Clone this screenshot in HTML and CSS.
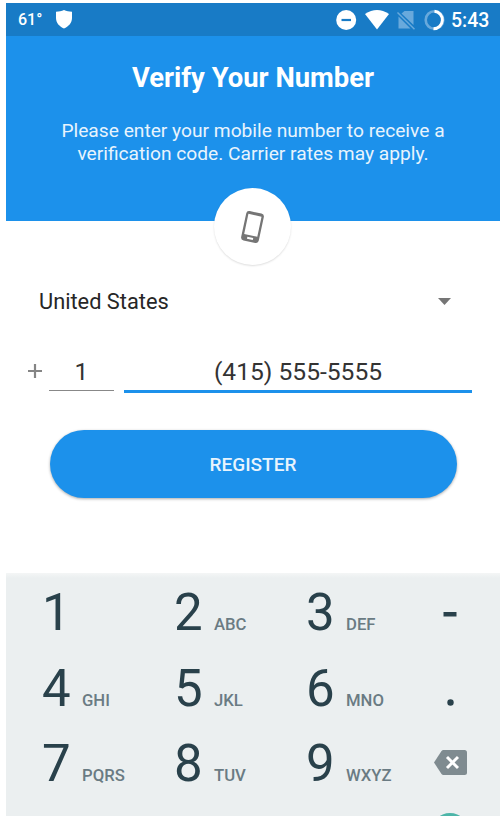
FILE: index.html
```html
<!DOCTYPE html>
<html lang="en">
<head>
<meta charset="utf-8">
<title>Verify Your Number</title>
<link rel="stylesheet" href="styles.css">
</head>
<body>
<main class="screen">
  <div class="status">
    <span class="temp">61°</span>
    <svg class="shield" width="16" height="19" viewBox="0 0 16 19"><path d="M8 0C10.500 1.200 13 1.600 16 1.700V8C16 13 12.500 16.500 8 18.500C3.500 16.500 0 13 0 8V1.700C3 1.600 5.500 1.200 8 0Z" fill="#fff"/></svg>
    <svg class="indicators" width="110" height="24" viewBox="0 0 110 24">
      <circle cx="10.200" cy="12" r="10" fill="#fff"/><path d="M5.500 12H15" stroke="#187bc6" stroke-width="2.200"/>
      <path d="M29 6Q41-1.800 53 6L41 21.500Z" fill="#fff"/>
      <path d="M68.500 3H77.500V17L65.500 5.500Z" fill="#68a9dc"/><path d="M62.500 8.500L74.500 20.500H62.500Z" fill="#68a9dc"/><path d="M61.500 4.500L78.500 21.300" stroke="#68a9dc" stroke-width="1.500"/>
      <circle cx="98.500" cy="12" r="8.800" fill="none" stroke="#68a9dc" stroke-width="2.600"/><path d="M98.500 3.200A8.800 8.800 0 0 1 97.500 20.750" fill="none" stroke="#fff" stroke-width="2.900"/>
    </svg>
    <span class="clock">5:43</span>
  </div>
  <header class="hero">
    <h1>Verify Your Number</h1>
    <p>Please enter your mobile number to receive a<br>verification code. Carrier rates may apply.</p>
    <div class="badge">
      <svg width="27" height="34" viewBox="0 0 27 34"><g transform="rotate(12 13.500 17)"><rect x="4.500" y="2" width="18" height="30" rx="3" fill="#757575"/><rect x="6.800" y="5" width="13.400" height="20.500" fill="#fff"/><rect x="10.500" y="27.600" width="6" height="2" fill="#fff"/></g></svg>
    </div>
  </header>
  <section class="form">
    <div class="country"><span>United States</span><svg width="13" height="7" viewBox="0 0 13 7"><path d="M0 0H13L6.500 7Z" fill="#757575"/></svg></div>
    <div class="phone">
      <svg class="plus" width="14" height="14" viewBox="0 0 14 14"><path d="M7 0V14M0 7H14" stroke="#858585" stroke-width="2.200"/></svg>
      <div class="field code">1</div>
      <div class="field number">(415) 555-5555</div>
    </div>
    <button class="register"><span>REGISTER</span></button>
  </section>
  <section class="keypad">
    <div class="key"><b>1</b></div><div class="key"><b>2</b><span>ABC</span></div><div class="key"><b>3</b><span>DEF</span></div>
    <div class="side dash"><svg width="14" height="5" viewBox="0 0 14 5"><path d="M0.500 0H13.500V4.500H0.500Z" fill="#29414b"/></svg></div>
    <div class="key"><b>4</b><span>GHI</span></div><div class="key"><b>5</b><span>JKL</span></div><div class="key"><b>6</b><span>MNO</span></div>
    <div class="side dot"><svg width="7" height="7" viewBox="0 0 7 7"><circle cx="3.500" cy="3.500" r="3.200" fill="#29414b"/></svg></div>
    <div class="key"><b>7</b><span>PQRS</span></div><div class="key"><b>8</b><span>TUV</span></div><div class="key"><b>9</b><span>WXYZ</span></div>
    <div class="side back"><svg width="33" height="25" viewBox="0 0 33 25"><path d="M9.500 0H30.500Q33 0 33 2.500V22.500Q33 25 30.500 25H9.500Q8.300 25 7.500 24L0 12.500L7.500 1Q8.300 0 9.500 0Z" fill="#7f8b90"/><path d="M13 7L24 18M24 7L13 18" stroke="#fff" stroke-width="2.900"/></svg></div>
    <div class="side enter"><svg width="38" height="38" viewBox="0 0 38 38"><circle cx="19" cy="19" r="19" fill="#4cb5a8"/></svg></div>
  </section>
</main>
</body>
</html>
```
FILE: styles.css
```css
* { box-sizing: border-box; }
body { margin: 0; background: #fff; font-family: Roboto, sans-serif; overflow: hidden; }
svg { display: block; flex: none; }
.screen { height: 816px; padding: 3px 0 0 6px; display: flex; flex-direction: column; overflow: hidden; }
.status { height: 33px; flex: none; background: #187bc6; color: #fff; display: flex; align-items: center; padding: 0 11px 0 12px; font-weight: 500; }
.temp { font-size: 16px; width: 38px; }
.indicators { margin-left: auto; }
.clock { font-size: 19.5px; width: 38px; margin-left: 5px; padding-top: 1px; white-space: nowrap; }
.hero { height: 185px; flex: none; background: #1c91eb; color: #fff; text-align: center; position: relative; }
h1 { margin: 0; padding-top: 25px; font-size: 27.4px; line-height: 34px; font-weight: 700; }
p { margin: 24px 0 0; font-size: 19.2px; line-height: 23px; color: #e8f4fd; }
.badge { position: absolute; left: 208px; top: 152px; width: 77px; height: 77px; border-radius: 50%; background: #fff; display: flex; align-items: center; justify-content: center; box-shadow: 0 1px 2px #0002; }
.form { height: 352px; flex: none; padding-top: 65px; }
.country { height: 30px; display: flex; align-items: center; justify-content: space-between; padding: 0 49px 0 33px; font-size: 21.8px; color: #262626; }
.country span { padding-top: 1px; }
.phone { display: flex; height: 60px; margin-top: 17px; padding: 0 28px 0 22px; align-items: flex-start; }
.plus { margin-top: 31px; }
.field { height: 60px; padding-top: 22px; text-align: center; font-size: 24.6px; line-height: 34px; color: #333; }
.code { width: 65px; margin-left: 7px; border-bottom: 1px solid #888; height: 58px; }
.number { flex: 1; margin-left: 10px; border-bottom: 3px solid #1c91eb; }
.register { display: flex; align-items: center; justify-content: center; margin: 37px 0 0 43.5px; width: 407px; height: 68px; padding: 0; border: 0; border-radius: 34px; background: #1c91eb; color: #e8f4fd; font: 500 19px Roboto, sans-serif; box-shadow: 0 1px 3px #0005; }
.keypad { flex: 1; min-height: 0; background: linear-gradient(#f4f6f6, #ebeff0 5px); display: grid; grid-template-columns: 132px 132px 119px 50px; grid-auto-rows: 75.5px; padding: 1px 0 0 36px; }
.key { display: flex; align-items: baseline; color: #29414b; line-height: 77.5px; }
.key b { font-size: 51px; font-weight: 400; width: 40px; }
.key span { font-size: 16.7px; font-weight: 500; color: #6a7b83; }
.side { display: flex; align-items: center; justify-content: center; }
.dash { padding-top: 5px; }
.dot { padding-top: 31px; }
.enter { grid-column: 4; align-items: flex-start; padding-top: 12px; }
```
